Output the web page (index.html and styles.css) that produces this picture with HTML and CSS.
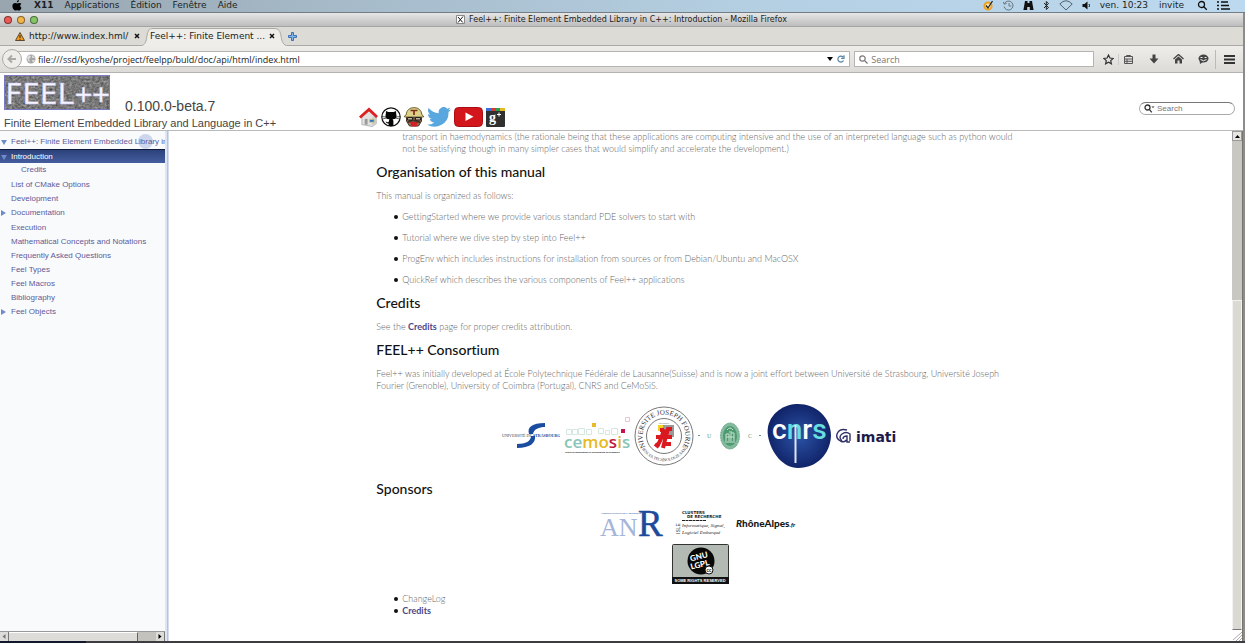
FILE: index.html
```html
<!DOCTYPE html>
<html lang="en">
<head>
<meta charset="utf-8">
<title>Feel++: Finite Element Embedded Library in C++: Introduction</title>
<link rel="stylesheet" href="styles.css">
</head>
<body>
<header class="menubar">
  <svg class="apple" width="10" height="11" viewBox="0 0 10 11"><path d="M6.9 0C7 1.2 6 2.4 4.9 2.4 4.8 1.300 5.700.2 6.900 0zM9.500 7.700C9 9.200 8 10.600 7 10.600c-.7 0-1-.4-1.900-.4s-1.200.4-1.900.4C1.800 10.600.4 8.300.4 6.100c0-2.100 1.300-3.200 2.600-3.200.9 0 1.500.5 2.200.5.600 0 1.400-.6 2.500-.5.600 0 1.300.3 1.700.9C7.700 4.800 7.900 7 9.500 7.700z"/></svg>
  <nav class="menus">
    <button class="app">X11</button><button>Applications</button><button>Édition</button><button>Fenêtre</button><button>Aide</button>
  </nav>
  <div class="tray">
    <svg width="11" height="11" viewBox="0 0 11 11" fill="none"><circle cx="5" cy="6" r="3.600" stroke="#f0a020" stroke-width="2" fill="#fbe6b0"/><path d="M3 5.500l2 2.500 4.500-7" stroke="#222" stroke-width="1.300"/></svg>
    <svg width="11" height="11" viewBox="0 0 11 11" fill="none" stroke="#68747d"><path d="M1.500 3.500a4.500 4.500 0 1 1-.4 3M.3 2l1 2.200 2.200-.7M6 3v3h2.300"/></svg>
    <svg width="11" height="11" viewBox="0 0 11 11" fill="#111"><path d="M2 1h2.500v2h2V1H9l.6 3.500 1 5.500H6.800V7H4.200v3H.4l1-5.500z"/></svg>
    <svg width="7" height="11" viewBox="0 0 7 11" fill="none" stroke="#222"><path d="M1 3l4.500 4.500-2.200 2V1.500l2.200 2L1 8"/></svg>
    <svg width="14" height="11" viewBox="0 0 14 11" fill="none" stroke="#56616a"><path d="M.8 4Q7-2.500 13.200 4L7 10z"/></svg>
    <svg width="9" height="11" viewBox="0 0 9 11"><path d="M.5 4h2L5.500 1.500v8L2.500 7h-2z" fill="#111"/><path d="M7 4q1 1.500 0 3" fill="none" stroke="#111"/></svg>
    <span>ven. 10:23</span><span class="user">invite</span>
    <svg width="11" height="11" viewBox="0 0 11 11" fill="none" stroke="#111" stroke-width="1.300"><circle cx="4.500" cy="4.500" r="3"/><path d="M6.800 6.800l3 3"/></svg>
    <svg width="14" height="11" viewBox="0 0 14 11" stroke="#111" stroke-width="1.500"><path d="M0 2h2M0 5.500h2M0 9h2M4 2h7M4 5.500h8M4 9h9"/></svg>
  </div>
</header>
<div class="window">
<div class="titlebar">
  <div class="lights"><button class="red" aria-label="Close"></button><button class="amber" aria-label="Minimize"></button><button class="green" aria-label="Zoom"></button></div>
  <div class="wtitle"><svg width="9" height="9" viewBox="0 0 9 9"><path d="M.5.5h8v8h-8z" fill="#fff" stroke="#888"/><path d="M2 2l4.800 5.500M7 1.500l-5 6" stroke="#111"/></svg><span>Feel++: Finite Element Embedded Library in C++: Introduction - Mozilla Firefox</span></div>
</div>
<div class="tabs">
  <div class="tab"><svg width="10" height="9" viewBox="0 0 10 9"><path d="M5 .5L9.500 8.500h-9z" fill="#f59b1c" stroke="#5c4a32"/><path d="M5 3v3M5 6.800v1" stroke="#222"/></svg><button class="label">http://www.index.hml/</button><button class="close" aria-label="Close tab"><svg width="6" height="6" viewBox="0 0 6 6"><path d="M1 1l4 4M5 1L1 5" stroke="#111" stroke-width="1.500"/></svg></button></div>
  <div class="tab active">
    <svg class="shape" viewBox="0 0 148 19" preserveAspectRatio="none"><path d="M0 19C6 18 6 14 7 9 8 3 9 1.500 13 1.500H134C139 1.500 140 4 141 9c1 6 2 9 7 10" fill="#eeedea" stroke="#aaa9a5"/></svg>
    <button class="label">Feel++: Finite Element ...</button><button class="close" aria-label="Close tab"><svg width="6" height="6" viewBox="0 0 6 6"><path d="M1 1l4 4M5 1L1 5" stroke="#111" stroke-width="1.500"/></svg></button></div>
  <button class="plus" aria-label="New tab"><svg width="9" height="9" viewBox="0 0 9 9"><path d="M3.500.5h2v3h3v2h-3v3h-2v-3h-3v-2h3z" fill="#84b3e6" stroke="#3c72b5"/></svg></button>
</div>
<div class="toolbar">
  <button class="back" aria-label="Back"><svg width="10" height="10" viewBox="0 0 10 10"><path d="M9 5H2M5 1.500L1.500 5 5 8.500" fill="none" stroke="#aaa9a5" stroke-width="2"/></svg></button>
  <div class="urlbox">
    <svg width="10" height="10" viewBox="0 0 10 10"><circle cx="5" cy="5" r="4.500" fill="#a5a5a5"/><path d="M1 3l3-2 1 2-2 2 1 3-2-1zM6 1l3 3-3 0zM6 6l3 0-2 3z" fill="#ddd"/></svg>
    <input aria-label="Address" value="file:///ssd/kyoshe/project/feelpp/buld/doc/api/html/index.html">
    <svg width="6" height="4" viewBox="0 0 6 4"><path d="M0 0h6L3 4z"/></svg>
    <button class="reload" aria-label="Reload"><svg width="8" height="8" viewBox="0 0 8 8" fill="none" stroke="#5884a5" stroke-width="1.200"><path d="M6.500 5.500a3 3 0 1 1-.4-3.500M7 .3v3H4.200"/></svg></button>
  </div>
  <div class="searchbox">
    <svg width="9" height="9" viewBox="0 0 9 9" fill="none" stroke="#777" stroke-width="1.200"><circle cx="3.500" cy="3.500" r="2.700"/><path d="M5.500 5.500l3 3"/></svg>
    <input aria-label="Web search" placeholder="Search">
  </div>
  <div class="tools">
    <button aria-label="Bookmark"><svg width="11" height="11" viewBox="0 0 11 11"><path d="M5.500 1l1.400 3 3.200.4-2.400 2.200.7 3.200-2.900-1.600-2.900 1.600.7-3.200L.9 4.400 4.100 4z" fill="none" stroke="#333" stroke-width="1.200"/></svg></button>
    <button class="clip" aria-label="Bookmarks list"><svg width="11" height="11" viewBox="0 0 11 11" fill="none" stroke="#555"><path d="M1.500 2.500h8v7h-8zM3.500 2.500v-1h4v1M1.500 5h8M1.500 7.300h8M4 5v4"/></svg></button>
    <button aria-label="Downloads"><svg width="10" height="10" viewBox="0 0 10 10"><path d="M3.500.5h3v4h3L5 9.500.5 4.500h3z" fill="#444"/></svg></button>
    <button aria-label="Home"><svg width="11" height="10" viewBox="0 0 11 10"><path d="M.5 5l5-4.500L10.500 5" fill="none" stroke="#444" stroke-width="1.300"/><path d="M2 5.500L5.500 2.500 9 5.500v4H6.500v-3h-2v3H2z" fill="#444"/></svg></button>
    <button aria-label="Chat"><svg width="11" height="10" viewBox="0 0 11 10"><ellipse cx="5.500" cy="4.500" rx="5" ry="4" fill="#444"/><path d="M1.500 6L2 10l3-2z" fill="#444"/><path d="M2.500 3.500h2M6.500 3.500h2M2.500 5.500q3 2.500 6 0" fill="none" stroke="#eee"/></svg></button>
    <button class="burger" aria-label="Menu"><svg width="11" height="9" viewBox="0 0 11 9" stroke="#333" stroke-width="2"><path d="M0 1h11M0 4.500h11M0 8h11"/></svg></button>
  </div>
</div>
<div class="pagehead">
  <div class="brand">
    <div class="brandrow">
      <svg width="106" height="35" viewBox="0 0 106 35" role="img">
        <filter id="grain" color-interpolation-filters="sRGB"><feTurbulence type="fractalNoise" baseFrequency=".35 .5" numOctaves="2"/><feColorMatrix values=".5 0 0 0 .22  .5 0 0 0 .22  .5 0 0 0 .22  0 0 0 0 1"/></filter>
        <rect width="106" height="35" filter="url(#grain)"/><rect x=".5" y=".5" width="105" height="34" fill="none" stroke="#7b79c4"/>
        <text x="1" y="29" class="feel">FEEL++</text>
      </svg>
      <span class="version">0.100.0-beta.7</span>
    </div>
    <div class="brief">Finite Element Embedded Library and Language in C++</div>
  </div>
  <div class="social">
    <a href="#home" aria-label="Home"><svg width="19" height="20" viewBox="0 0 20 20"><path d="M3 9v9l11 2 4-3V9l-7-6z" fill="#e2e2e2" stroke="#999" stroke-width=".7"/><path d="M14 10v10l5-3V9z" fill="#ccc"/><path d="M1 10.500L10.500 2 19 10" fill="none" stroke="#dd2020" stroke-width="3"/><path d="M6 12h3v6H6z" fill="#999"/><path d="M11 12.500h5v3h-5z" fill="#3576b7" stroke="#ddd070" stroke-width=".7"/></svg></a>
    <a href="#github" aria-label="GitHub"><svg width="20" height="20" viewBox="0 0 20 20"><circle cx="10" cy="10" r="9.200" fill="#fff" stroke="#111" stroke-width="1.200"/><path d="M5 4l2.400 1h5.200L15 4l.2 2.700q1.600 5.500-3.600 5.500l.8 1.500V19H7.600v-2.500q-2.600.3-3-2.200 1.800 1.500 3 .7L8.400 12.200q-5.200 0-3.600-5.500z" fill="#050505"/><path d="M1 9.500l4 .5M19 9.500l-4 .5M1.500 12l4-1M18.500 12l-4-1" stroke="#222" stroke-width=".7"/></svg></a>
    <a href="#travis" aria-label="Travis"><svg width="20" height="20" viewBox="0 0 20 20"><path d="M2.500 8h15v6l-3 5h-9l-3-5z" fill="#9b7455" stroke="#42332a"/><path d="M6 15h8l-1.500 4.500h-5z" fill="#cf2028"/><path d="M4 15.500q2-2.500 6-2t6 2" stroke="#433024" stroke-width="2" fill="none"/><path d="M2 8Q3 .6 10 .6T18 8l1.500 1v1H.5V9z" fill="#ddd188" stroke="#716737"/><path d="M6.500 3.500h7M10 3.500V8" stroke="#7b2d22" stroke-width="1.700"/><path d="M3.500 10.500h5v2.500h-5zM11.500 10.500h5v2.500h-5zM8.500 11h3" stroke="#222" fill="#c5ac94"/></svg></a>
    <a href="#twitter" aria-label="Twitter"><svg width="24" height="20" viewBox="0 0 24 20"><path d="M24 2.400a9 9 0 0 1-2.800.8A5 5 0 0 0 23.300.5a10 10 0 0 1-3.100 1.200 4.900 4.900 0 0 0-8.400 4.500A14 14 0 0 1 1.700 1a4.900 4.900 0 0 0 1.500 6.600A5 5 0 0 1 1 7a5 5 0 0 0 3.900 4.900 5 5 0 0 1-2.200.1 5 5 0 0 0 4.600 3.400A10 10 0 0 1 0 17.500 14 14 0 0 0 21.500 5 10 10 0 0 0 24 2.400z" fill="#58a7df"/></svg></a>
    <a href="#youtube" aria-label="YouTube"><svg width="29" height="20" viewBox="0 0 29 20"><rect x=".5" y=".5" width="28" height="19" rx="4" fill="#d2161c" stroke="#aa0e14"/><path d="M11.500 5.500v8.500l8-4.200z" fill="#fff"/></svg></a>
    <a href="#gplus" aria-label="Google Plus"><svg width="19" height="19" viewBox="0 0 19 19"><rect width="19" height="19" rx="1" fill="#303030"/><path d="M0 0h5v3H0z" fill="#3d6fd8"/><path d="M5 0h5v3H5z" fill="#d93a30"/><path d="M10 0h5v3h-5z" fill="#3d6fd8"/><path d="M10 0h4v3h-4z" fill="#2b9f50"/><path d="M14 0h5v3h-5z" fill="#e8b820"/><text x="3" y="14" class="gp">g</text><path d="M11 6.500h4M13 4.500v4" stroke="#fff"/></svg></a>
  </div>
  <label class="docsearch"><svg width="11" height="9" viewBox="0 0 11 9" fill="none" stroke="#333" stroke-width="1.300"><circle cx="3.500" cy="3.500" r="2.500"/><path d="M5.300 5.300l2.500 3"/><path d="M7.500 2.500h3L9 4z" fill="#333" stroke="none"/></svg><input aria-label="Search documentation" placeholder="Search"></label>
</div>
<div class="body">
  <aside class="side">
    <nav class="tree">
      <span class="spot"></span>
      <a class="open" href="#top">Feel++: Finite Element Embedded Library in C++</a>
      <a class="open current" href="#intro">Introduction</a>
      <a class="child" href="#credits">Credits</a>
      <a href="#cmake">List of CMake Options</a>
      <a href="#dev">Development</a>
      <a class="closed" href="#doc">Documentation</a>
      <a href="#exec">Execution</a>
      <a href="#math">Mathematical Concepts and Notations</a>
      <a href="#faq">Frequently Asked Questions</a>
      <a href="#types">Feel Types</a>
      <a href="#macros">Feel Macros</a>
      <a href="#biblio">Bibliography</a>
      <a class="closed" href="#objects">Feel Objects</a>
    </nav>
    <div class="hscroll"><button aria-label="Scroll left"><svg width="4" height="5" viewBox="0 0 4 5"><path d="M3.500 0v5L.5 2.500z" fill="#777"/></svg></button><span class="hthumb"></span><span class="htrack"></span><button aria-label="Scroll right"><svg width="4" height="5" viewBox="0 0 4 5"><path d="M.5 0v5l3-2.500z"/></svg></button></div>
  </aside>
  <div class="splitter"></div>
  <main class="doc">
    <article class="column">
      <div class="cont">transport in haemodynamics (the rationale being that these applications are computing intensive and the use of an interpreted language such as python would not be satisfying though in many simpler cases that would simplify and accelerate the development.)</div>
      <h1>Organisation of this manual</h1>
      <p>This manual is organized as follows:</p>
      <ul class="loose">
        <li>GettingStarted where we provide various standard PDE solvers to start with</li>
        <li>Tutorial where we dive step by step into Feel++</li>
        <li>ProgEnv which includes instructions for installation from sources or from Debian/Ubuntu and MacOSX</li>
        <li>QuickRef which describes the various components of Feel++ applications</li>
      </ul>
      <h1>Credits</h1>
      <p>See the <a href="#credits">Credits</a> page for proper credits attribution.</p>
      <h1>FEEL++ Consortium</h1>
      <p>Feel++ was initially developed at École Polytechnique Fédérale de Lausanne(Suisse) and is now a joint effort between Université de Strasbourg, Université Joseph Fourier (Grenoble), University of Coimbra (Portugal), CNRS and CeMoSiS.</p>
      <div class="logos">
        <svg width="58" height="28" viewBox="0 0 58 28"><path d="M43 1C30 1 25 5 27 12L31 12C32 7 37 5 43 5zM33 14c1 7-5 12-18 12v-4c9 0 14-3 14-8z" fill="#1a4da0"/><text x="0" y="15" class="unistra">UNIVERSITÉ DE <tspan class="b">STRASBOURG</tspan></text></svg>
        <svg width="66" height="38" viewBox="0 0 66 38" fill="none" stroke="#d5e8df"><path d="M2.500 12.500h5v5h-5zM8.500 12.500h5v5h-5zM14.500 11.500h6v6h-6zM22.500 12.500h5v5h-5zM34.500 11.500h5v5h-5zM41.500 13.500h4v4h-4zM47.500 11.500h6v6h-6z"/><path d="M28 6h4v4h-4z" fill="#eab92b" stroke="none"/><path d="M57 12h4v4h-4z" fill="#c4144b" stroke="none"/><path d="M61.500.5h4v4h-4z" stroke="#edc4ce"/><text x="0" y="31" class="cemosis"><tspan fill="#87c5b8">ce</tspan><tspan fill="#e8b923">mo</tspan><tspan fill="#bd1a3d">s</tspan><tspan fill="#ddb13c">i</tspan><tspan fill="#87c5b8">s</tspan></text><text x="1" y="36" class="cemosub">Centre de modélisation et de simulation de Strasbourg</text></svg>
        <svg width="60" height="60" viewBox="0 0 60 60"><circle cx="30" cy="30" r="29" fill="#fff" stroke="#777"/><circle cx="30" cy="30" r="17.500" fill="none" stroke="#777"/><path id="ringtop" d="M11.500 41A21.500 21.500 0 1 1 48.500 41" fill="none"/><path id="ringbot" d="M8 43A26 26 0 0 0 52 43" fill="none"/><text class="ring"><textPath href="#ringtop" startOffset="50%">UNIVERSITE JOSEPH FOURIER</textPath></text><text class="ring2"><textPath href="#ringbot" startOffset="50%">SCIENCES.TECHNOLOGIE.SANTE</textPath></text><path d="M24 19h6v6h-6z" fill="#f3d025"/><path d="M29 19h11v12H29z" fill="#999"/><text x="30" y="18" class="tiny">GRENOBLE</text><path d="M30 23q-3 12-7 17M26 24h4M38 23h-4q-3 10-5 19M21 38l4 3M22 31h16M29 38h8" stroke="#db1720" stroke-width="4" fill="none"/></svg>
        <svg class="uc" width="64" height="30" viewBox="0 0 64 30"><ellipse cx="32" cy="15" rx="9.500" ry="13" fill="#84bb9e" stroke="#5b9e7a" stroke-dasharray="1 .6"/><ellipse cx="32" cy="15" rx="7" ry="10" fill="#4e9a70"/><path d="M28 20v-7h3v7M33 20v-8h3v8M27 21h10M29 9q3-4 6 0M31 11h3M28 16h8" stroke="#cae3d4" fill="none"/><text x="9" y="17" class="ucl">U</text><text x="50" y="17" class="ucl">C</text><path d="M0 14.500h2M61 14.500h2" stroke="#5e9b7a"/></svg>
        <svg width="66" height="66" viewBox="0 0 66 66"><defs><radialGradient id="cn"><stop offset="0" stop-color="#2b53a7"/><stop offset="1" stop-color="#112469"/></radialGradient></defs><path d="M30 1C48 0 65 13 65 33 64 51 51 65 32 65 17 65 5 50 2 33-1 15 14 2 30 1z" fill="url(#cn)"/><text x="6" y="36" class="cnrs"><tspan>c</tspan><tspan class="teal">n</tspan><tspan>r</tspan><tspan class="teal">s</tspan></text><path d="M29.500 22v38" stroke="#dce6f4" stroke-width="2"/></svg>
        <svg width="63" height="18" viewBox="0 0 63 18"><path d="M14 15h-3V9q-4 0-4 3M14 14V7Q10 4 6 7t0 7M11 3Q4 1 1.500 6t3 8q4 2 6-1" fill="none" stroke="#312f69" stroke-width="1.400"/><text x="20" y="15" class="imati">imati</text></svg>
      </div>
      <h1>Sponsors</h1>
      <div class="sponsors">
        <svg width="64" height="30" viewBox="0 0 64 30"><text x="0" y="27" class="anr">AN</text><text x="38" y="27" class="anr r">R</text><text x="1" y="5" class="anrsub">AGENCE NATIONALE DE LA RECHERCHE</text></svg>
        <svg width="52" height="30" viewBox="0 0 52 30"><text x="8" y="5" class="clu">CLUSTERS</text><text x="13" y="9" class="clu">DE RECHERCHE</text><path d="M8 11.500h24" stroke="#222" stroke-dasharray="3 .5"/><text x="8" y="18" class="hand">Informatique, Signal,</text><text x="8" y="25" class="hand">Logiciel Embarqué</text><text transform="translate(6 25) rotate(-90)" class="isle">ISLE</text></svg>
        <svg width="64" height="16" viewBox="0 0 64 16"><text x="0" y="11" class="rhone"><tspan font-style="italic">R</tspan>hôneAlpes<tspan class="fr">.fr</tspan></text></svg>
      </div>
      <div class="license">
        <svg width="57" height="40" viewBox="0 0 57 40"><rect x=".5" y=".5" width="56" height="39" rx="1" fill="#b3bab3" stroke="#333"/><circle cx="29" cy="17" r="13.500" fill="#080808"/><g transform="rotate(-14 29 17)"><text x="28" y="15" class="gnu">GNU</text><text x="27" y="23" class="gnu">LGPL</text></g><circle cx="37" cy="26" r="4" fill="#fff" stroke="#111"/><text x="37" y="28" class="cc">cc</text><path d="M0 33h57v7H0z" fill="#111"/><text x="28" y="38" class="rights">SOME RIGHTS RESERVED</text></svg>
      </div>
      <ul class="tight"><li>ChangeLog</li><li><a href="#credits">Credits</a></li></ul>
    </article>
  </main>
  <div class="vscroll"><button aria-label="Scroll up"><svg width="5" height="3" viewBox="0 0 5 3"><path d="M0 3h5L2.500 0z"/></svg></button><span class="vtrack"></span><span class="vthumb"></span><svg class="grip" width="10" height="11" viewBox="0 0 10 11" stroke="#aaa"><path d="M1 10l9-8M4 11l6-6M7 11l3-3"/></svg></div>
</div>
</div>
<footer class="dock"></footer>
</body>
</html>
```

FILE: styles.css
```css
* { box-sizing: border-box; }
html, body { height: 100%; margin: 0; }
body { display: flex; flex-direction: column; overflow: hidden; background: #fff; font-family: "Liberation Sans", sans-serif; }
button { border: 0; padding: 0; margin: 0; background: none; font: inherit; color: inherit; white-space: nowrap; }
input { border: 0; padding: 0; outline: 0; background: none; font: inherit; color: inherit; min-width: 0; flex: 1; }
svg { display: block; flex: none; }
a { text-decoration: none; }

.menubar { display: flex; align-items: center; height: 13px; flex: none; padding: 0 14px 2px 12px; background: linear-gradient(90deg, #98a5af, #a7bccb 30%, #b4cfe2 60%, #bdd9ef); border-bottom: 1px solid #727d86; font: 9px "DejaVu Sans", sans-serif; color: #1c1f22; }
.menus { display: flex; gap: 11px; margin-left: 12px; }
.app { font-weight: bold; }
.tray { margin-left: auto; display: flex; align-items: center; gap: 9px; }
.user { margin-left: 2px; margin-right: 4px; }

.window { flex: 1; min-height: 0; display: flex; flex-direction: column; border-right: 2px solid #8c8c8c; }
.titlebar { height: 14px; flex: none; display: flex; align-items: center; background: linear-gradient(#e6e6e6, #bdbdbd); border-bottom: 1px solid #a5a5a5; }
.lights { display: flex; gap: 5px; padding-left: 4px; width: 44px; }
.lights button { width: 8px; height: 8px; border-radius: 50%; border: 1px solid #00000070; }
.red { background: #ec5a55; }
.amber { background: #f3b54a; }
.green { background: #85c566; }
.wtitle { flex: 1; margin-right: 44px; display: flex; justify-content: center; align-items: center; gap: 4px; font: 8px "DejaVu Sans", sans-serif; color: #222; }

.tabs { height: 19px; flex: none; display: flex; align-items: center; background: #dcdbd6; border-bottom: 1px solid #aaa9a5; font: 9px "DejaVu Sans", sans-serif; color: #222; padding-left: 15px; }
.tab { display: flex; align-items: center; height: 19px; width: 125px; gap: 4px; }
.tab .close { margin-left: auto; }
.active { position: relative; width: 134px; padding-left: 10px; }
.shape { position: absolute; inset: 0 auto auto 0; width: 148px; height: 19px; }
.active .label, .active .close { position: relative; }
.plus { margin-left: 14px; }

.toolbar { height: 27px; flex: none; display: flex; align-items: center; background: linear-gradient(#eeedea, #dcdbd7); border-bottom: 1px solid #b5b4b0; padding: 0 4px 0 2px; font: 9px "Open Sans", sans-serif; color: #222; }
.back { position: relative; width: 20px; height: 20px; border: 1px solid #aaa9a5; border-radius: 50%; background: #eeedea; display: grid; place-content: center; flex: none; margin-right: -4px; }
.urlbox, .searchbox { display: flex; align-items: center; height: 16px; background: #fff; border: 1px solid #b5b4b0; }
.urlbox { flex: 838; padding: 0 4px 0 7px; gap: 2px; }
.reload { margin-left: 2px; }
.searchbox { flex: 235; margin-left: 4px; padding: 0 4px; gap: 3px; }
::placeholder { color: #777; opacity: 1; }
.tools { display: flex; align-items: center; gap: 14px; margin-left: 9px; }
.clip { border-left: 1px solid #ccc; padding-left: 4px; margin-left: -10px; margin-right: 1px; }
.burger { border-left: 1px solid #bbb; padding: 5px 4px 5px 8px; margin-left: -8px; }

.pagehead { flex: none; display: grid; grid-template-columns: 355px 1fr auto; align-items: end; height: 58px; border-bottom: 1px solid #b9b9b9; padding: 2px 8px 0 4px; background: #fff; color: #444; }
.brandrow { display: flex; align-items: flex-end; gap: 15px; }
.feel { font: 29px "DejaVu Sans Mono", monospace; fill: #f5f4ff; stroke: #c9c5fb; stroke-width: .4px; }
.version { font-size: 14px; line-height: 14px; margin-bottom: -3px; }
.brief { font-size: 11px; line-height: 13px; margin-top: 7px; }
.social { display: flex; align-items: center; gap: 3px; margin-bottom: 3px; }
.gp { font: bold 14px "Liberation Serif", serif; fill: #fff; }
.docsearch { display: flex; align-items: center; gap: 2px; width: 96px; height: 13px; padding: 0 4px; margin-bottom: 15px; border: 1px solid #aaa; border-top-color: #777; border-radius: 7px; font-size: 8px; }
.docsearch input { width: 70px; }

.body { flex: 1; min-height: 0; display: flex; }
.side { width: 165px; flex: none; display: flex; flex-direction: column; background: #f9fafc; overflow: hidden; }
.tree { position: relative; flex: 1; display: flex; flex-direction: column; padding-top: 4px; font-size: 8px; line-height: 14px; }
.tree a { position: relative; padding-left: 11px; color: #5d5b99; white-space: nowrap; }
.tree .child { padding-left: 21px; margin-bottom: 1px; }
.tree .current { background: linear-gradient(#2c427b, #455d9f); border-top: 1px solid #101a3c; color: #fff; line-height: 13px; }
.open::before, .closed::before { content: ""; position: absolute; left: 1px; top: 5px; border: 3px solid transparent; }
.open::before { border-top: 5px solid #6f8bc8; border-bottom: 0; }
.closed::before { top: 4px; border-left: 5px solid #6f8bc8; border-right: 0; }
.tree .closed { margin-bottom: 1px; }
.spot { position: absolute; left: 138px; top: 3px; width: 15px; height: 15px; border-radius: 50%; background: #ccd6ed; }
.hscroll { display: flex; height: 10px; flex: none; background: #c3c2bd; border-top: 1px solid #999; }
.hscroll button { width: 9px; background: #dddcd8; border-right: 1px solid #777; display: grid; place-content: center; }
.hthumb { flex: 128; background: #dddcd8; border-right: 1px solid #666; border-top: 1px solid #fff; }
.htrack { flex: 18; }
.splitter { width: 4px; flex: none; background: #b4c2e4; border-left: 2px solid #dfe5f3; border-right: 1px solid #d5ddef; }

.doc { flex: 1; min-width: 0; overflow: hidden; background: #fff; font: 300 9px/12px Lato, sans-serif; font-variant-ligatures: none; color: #666; }
.column { width: 61%; margin: 0 auto; }
.column h1 { font-size: 14px; line-height: 17px; font-weight: 500; color: #111; margin: 8px 0 10px; }
.column p { margin: 0 0 8px; }
.column a { color: #4a4786; font-weight: bold; }
.cont { padding-left: 26px; }
.column ul { margin: 0; padding-left: 18px; list-style: none; }
.column li { display: flex; align-items: center; gap: 4px; }
.column li::before { content: ""; width: 4px; height: 4px; border-radius: 50%; background: #111; }
.column .loose { display: grid; gap: 9px; margin-top: 9px; }
.logos { display: flex; justify-content: center; align-items: center; gap: 4px; margin: 11px 0; }
.sponsors { display: flex; justify-content: center; align-items: center; gap: 10px; margin-top: 12px; }
.license { display: flex; justify-content: center; margin: 5px 0 9px; }
.unistra { font: 4px "Liberation Serif", serif; fill: #444; }
.unistra .b { font-weight: bold; fill: #1a4da0; }
.cemosis { font: 600 17px "Open Sans", sans-serif; stroke: none; }
.cemosub { font: bold 2px "Open Sans", sans-serif; fill: #222; stroke: none; }
.ring { font: 7px "Liberation Serif", serif; text-anchor: middle; fill: #333; }
.ring2 { font: 4px "Liberation Serif", serif; text-anchor: middle; fill: #333; }
.tiny { font: 2px "Liberation Serif", serif; fill: #333; text-anchor: middle; }
.ucl { font: 6px "Liberation Serif", serif; fill: #5e9b7a; }
.cnrs { font: 500 28px Roboto, sans-serif; fill: #fff; }
.teal { fill: #67dfe1; }
.imati { font: bold 14px "DejaVu Sans", sans-serif; fill: #1c1a4c; }
.anr { font: 26px "Liberation Serif", serif; fill: #a5b4d9; }
.anr.r { font-size: 37px; fill: #1d4a9b; stroke: #1d4a9b; stroke-width: .5px; }
.anrsub { font: bold 2px "Liberation Sans", sans-serif; fill: #3c70b5; }
.clu { font: bold 4px "DejaVu Sans", sans-serif; fill: #222; }
.hand { font: italic 5px "Liberation Serif", serif; fill: #222; }
.isle { font: 5px "Liberation Sans", sans-serif; fill: #222; }
.rhone { font: 900 10px Lato, sans-serif; fill: #181818; }
.fr { font-size: 6px; font-style: italic; }
.gnu { font: 900 8px Lato, sans-serif; fill: #fff; text-anchor: middle; }
.cc { font: bold 5px Lato, sans-serif; text-anchor: middle; }
.rights { font: bold 4px "Liberation Sans", sans-serif; fill: #fff; text-anchor: middle; }

.vscroll { width: 11px; flex: none; display: flex; flex-direction: column; background: #dad9d4; border-right: 1px solid #77756c; }
.vscroll button { height: 10px; background: #e6e5e2; border: 1px solid #999; display: grid; place-content: center; }
.vtrack { flex: 160; background: #c8c7c2; }
.vthumb { flex: 330; border: 1px solid #f3f2f0; border-bottom-color: #777; }
.grip { background: #fff; }
.dock { height: 2px; flex: none; background: linear-gradient(90deg, #11182b 86px, #3d3c40 86px); }
```
